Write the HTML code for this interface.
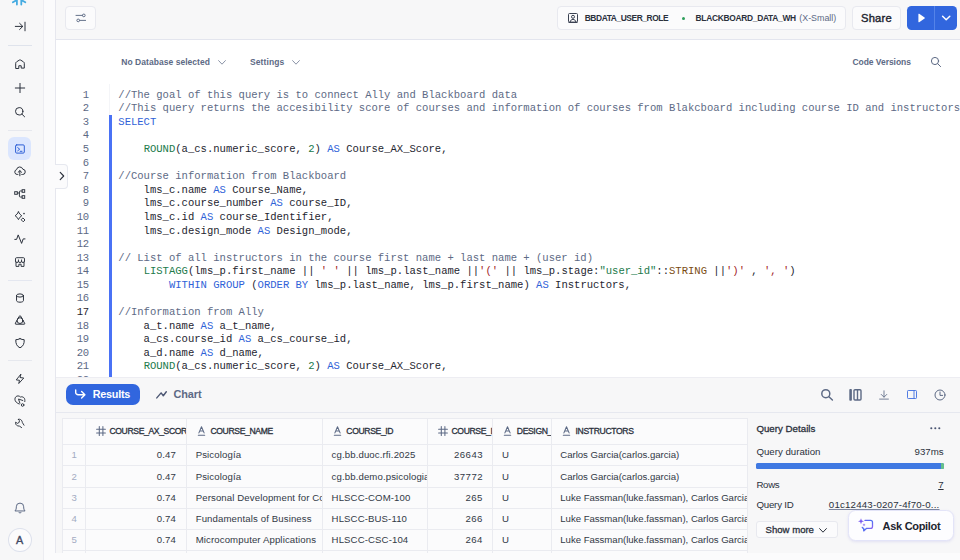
<!DOCTYPE html>
<html lang="en">
<head>
<meta charset="utf-8">
<title>Worksheet</title>
<style>
*{box-sizing:border-box;margin:0;padding:0}
html,body{width:960px;height:560px;overflow:hidden}
body{position:relative;background:#fbfbfc;font-family:"Liberation Sans",Arial,sans-serif;color:#1e252f;-webkit-font-smoothing:antialiased}
.abs{position:absolute}
#side{left:0;top:0;width:44px;height:560px;background:#f7f7f8;border-right:1px solid #ececf1}
#side svg{position:absolute;left:14px;width:12px;height:12px;overflow:visible;fill:none;stroke:#2b313c;stroke-width:1;stroke-linecap:round;stroke-linejoin:round}
.sdiv{position:absolute;left:8px;width:24px;height:1px;background:#dfe3ec}
#main{left:55px;top:0;width:905px;height:553px;background:#fff;border-left:1.4px solid #e6e7ee}
#top{left:56px;top:0;width:904px;height:40px;background:#f7f7f8;border-bottom:1px solid #e3e5ee}
.btn{position:absolute;background:#fbfbfc;border:1px solid #e8e9ef;border-radius:4px}
#edhead{left:56px;top:40px;width:904px;height:44px;background:#fff}
.lbl{position:absolute;font-size:8.5px;line-height:10px;font-weight:bold;color:#5d6a85;white-space:nowrap;letter-spacing:0.04px}
#code{left:56px;top:88.75px;width:904px;height:288px;overflow:hidden;background:#fff;font-family:"Liberation Mono","DejaVu Sans Mono",monospace;font-size:10.555px;line-height:13.585px;color:#1e252f}
#code .ln{position:absolute;left:0;top:0;width:32.8px;letter-spacing:-0.25px;text-align:right;color:#5d6a85;white-space:pre}
#code pre{position:absolute;left:62.3px;top:0;font:inherit;white-space:pre}
.c{color:#5d6a85}.k{color:#2f62d8}.f{color:#217a4b}.n{color:#217a4b}.s{color:#a3231f}.g{color:#217a4b}.t{color:#7a4b12}
#bar{left:109px;top:114.8px;width:2.7px;height:262px;background:#4a72f5}
#res{left:56px;top:376.5px;width:904px;height:176.5px;background:#f7f7f8;box-shadow:inset 0 1px 0 #ededf2}
.tb{font-size:8.4px;font-weight:bold;color:#2b313c;white-space:nowrap;line-height:12px;letter-spacing:-0.4px}
.chev{width:8px;height:5px;overflow:visible;fill:none;stroke:#7d879c;stroke-width:0.9;stroke-linecap:round;stroke-linejoin:round}
#tbl{background:#fbfbfc;border:1px solid #eaebf0}
.th{position:absolute;height:26px;line-height:25px;overflow:hidden;white-space:nowrap;font-size:8.6px;font-weight:normal;-webkit-text-stroke:0.3px #2b313c;color:#2b313c;letter-spacing:-0.36px;padding-left:22.9px}
.th .hi{position:absolute;left:9.2px;top:7.8px;width:10px;height:10px;overflow:visible;fill:none;stroke:#5d6a85;stroke-width:1.05;stroke-linecap:round;stroke-linejoin:round}
.td{position:absolute;overflow:hidden;white-space:nowrap;font-size:9.6px;color:#323946;padding:0 8.2px;letter-spacing:0.12px}
.td.r{text-align:right;padding-right:10.5px}
.td.c{text-align:center;color:#a3abc2;padding:0}
.vl{position:absolute;width:1px;background:#eaebf0}
.hl{position:absolute;height:1px;background:#eaebf0}
.qd{font-size:9.7px;line-height:12px;color:#2b313c;white-space:nowrap}
.md{font-weight:normal;color:#2b313c;-webkit-text-stroke:0.3px #2b313c}
</style>
</head>
<body>
<div id="side" class="abs">
<svg style="left:0;top:0;width:44px;height:8px" viewBox="0 0 44 8"><g stroke="#45abe1" stroke-width="1.8" fill="none" stroke-linecap="round" stroke-linejoin="round"><path d="M16.9 -1V4.5M21.3 -1V4.5M16.6 0.2L12.9 2.2M21.6 0.2L25.3 2.2"/></g></svg>
<svg style="top:20px" viewBox="0 0 12 12"><path d="M1.3 6.4H8.6M5.6 3.3L8.8 6.4L5.6 9.5M11 2.2V10.8"/></svg>
<div class="sdiv" style="top:45px"></div>
<svg style="top:58px" viewBox="0 0 12 12"><path d="M1.7 10.1V5.3Q1.7 4.4 2.5 3.9L5.3 2.1Q6 1.7 6.7 2.1L9.5 3.9Q10.3 4.4 10.3 5.3V10.1H7.2V7.75H4.8V10.1Z"/></svg>
<svg style="top:82px" viewBox="0 0 12 12"><path d="M1.3 6H10.7M6 1.4V10.6"/></svg>
<svg style="top:106px" viewBox="0 0 12 12"><circle cx="5.2" cy="5.3" r="3.7"/><path d="M8 8.2L10.6 10.8"/></svg>
<div class="sdiv" style="top:130px;background:#e6e8ee"></div>
<div class="abs" style="left:8px;top:137.2px;width:23.3px;height:22.7px;border-radius:6px;background:#dbe6fe"></div>
<svg style="top:142.6px;stroke:#2d5fd6" viewBox="0 0 12 12"><rect x="1.6" y="1.9" width="8.7" height="8.2" rx="1.1"/><path d="M3.7 4.6L5.7 6.2L3.7 7.8M6.2 8.3H8"/></svg>
<svg style="top:165px" viewBox="0 0 12 12"><path d="M3.9 9.5H3.3A2.5 2.5 0 0 1 2.6 4.6A3.2 3.2 0 0 1 8.8 4.2A2.6 2.6 0 0 1 8.4 9.5H7.8M5.85 10.8V5.8M4.1 7.3L5.85 5.6L7.6 7.3"/></svg>
<svg style="top:188px;stroke-linejoin:miter;stroke-width:0.95" viewBox="0 0 12 12"><rect x="0.7" y="3.7" width="2.6" height="2.6"/><rect x="8.1" y="1.7" width="2.6" height="2.6"/><rect x="8.1" y="7.7" width="2.6" height="2.6"/><path d="M3.3 5H5.4M8.1 3H6.2Q5.4 3 5.4 3.8V8.2Q5.4 9 6.2 9H8.1"/></svg>
<svg style="top:210.5px;stroke-linejoin:miter;stroke-width:0.95" viewBox="0 0 12 12"><path d="M4.45 0.9Q5.5 3.5 7.8 4.75Q5.5 6 4.45 8.6Q3.4 6 1.1 4.75Q3.4 3.5 4.45 0.9ZM9.2 7.2L11 9L9.2 10.8L7.4 9Z"/><circle cx="10" cy="2.6" r="0.8" fill="#2b313c" stroke="none"/></svg>
<svg style="top:233px" viewBox="0 0 12 12"><path d="M0.8 6.4H2.6L4.2 1.9L7.6 10.4L9.2 5.9H11"/></svg>
<svg style="top:256px;stroke-width:0.95" viewBox="0 0 12 12"><path d="M1.5 5.2V2.8Q1.5 1.7 2.6 1.7H9.4Q10.5 1.7 10.5 2.8V5.2M1.5 5.2A1.47 1.3 0 0 0 4.45 5.2A1.55 1.3 0 0 0 7.55 5.2A1.47 1.3 0 0 0 10.5 5.2M4.45 5.2V3.9M7.55 5.2V3.9M2 6.4V10.4H4.9V8.2H7.1V10.4H10V6.4"/></svg>
<div class="sdiv" style="top:279.5px;height:1.4px;background:#e4e7f0"></div>
<svg style="top:291.5px" viewBox="0 0 12 12"><ellipse cx="6" cy="3.5" rx="3.45" ry="1.6"/><path d="M2.55 3.5V8.6C2.55 9.5 4 10.2 6 10.2S9.45 9.5 9.45 8.6V3.5"/></svg>
<svg style="top:314px" viewBox="0 0 12 12"><path d="M5.5 1.9Q6 1.1 6.5 1.9L10.7 9.4Q11.1 10.2 10.2 10.2H1.8Q0.9 10.2 1.3 9.4Z"/><circle cx="6" cy="6.6" r="2.9"/></svg>
<svg style="top:337px" viewBox="0 0 12 12"><path d="M6 1.7C7.4 2.4 8.8 2.7 10.2 2.7C10.4 6.6 9.2 9.4 6 10.8C2.8 9.4 1.6 6.6 1.8 2.7C3.2 2.7 4.6 2.4 6 1.7Z"/></svg>
<div class="sdiv" style="top:360px;background:#e6e8ee"></div>
<svg style="top:372.5px;stroke-width:0.95" viewBox="0 0 12 12"><path d="M6.7 1.4L2.25 6.9L5.5 7.3L4.75 10.5L9.75 5L6.4 4.6Z"/></svg>
<svg style="top:395px;stroke-width:0.95" viewBox="0 0 12 12"><path d="M5.2 9C3 8.2 0.9 6.6 0.9 4.2C0.9 2.2 2.4 0.9 4 0.9C5 0.9 5.8 1.3 6.4 2C7.4 1.6 8.8 1.8 9.7 2.5C10.8 3.4 11 4.8 10.8 6.6M5.9 8.2L4.5 4L8.8 5.5"/><circle cx="8.6" cy="10" r="1.3"/></svg>
<svg style="top:417px;stroke-width:0.95" viewBox="0 0 12 12"><path d="M4.3 2.3C5.8 1.8 7.4 2.6 8 4.2L8.4 5.6L10 8.2M4.3 2.3L5.4 3.6L5.2 5.4L3.4 6.4L1.6 5.2C1.2 6.6 2 8.2 3.6 8.8L5.6 9.2L7.6 10.6"/></svg>
<svg style="top:502px;stroke:#5d6a85" viewBox="0 0 12 12"><path d="M1.2 8.7C2.2 7.8 2.3 6.6 2.3 4.8A3.7 3.7 0 0 1 9.7 4.8C9.7 6.6 9.8 7.8 10.8 8.7ZM4.9 10.3A1.2 1.2 0 0 0 7.1 10.3"/></svg>
<div class="abs" style="left:7.6px;top:528.2px;width:24px;height:24.2px;border-radius:50%;border:1px solid #dde1ec;background:#fbfbfc;text-align:center;font-size:10.8px;line-height:22.4px;color:#3f4963;-webkit-text-stroke:0.35px #3f4963">A</div>
</div>
<div id="main" class="abs"></div>
<div id="top" class="abs">
<div class="btn" style="left:9.3px;top:6px;width:31.2px;height:24.2px"></div>
<svg class="abs" style="left:18.6px;top:11.5px;width:12px;height:12px;overflow:visible" viewBox="0 0 12 12" fill="none" stroke="#5d6a85" stroke-width="0.95"><path d="M1 3.4H7.4M4.6 8.4H10.6" stroke-linecap="round"/><circle cx="8.8" cy="3.4" r="1.35"/><circle cx="3.2" cy="8.4" r="1.35"/></svg>
<div class="btn" style="left:501px;top:6px;width:288.5px;height:24px"></div>
<svg class="abs" style="left:511.5px;top:13px;width:10px;height:10px;overflow:visible" viewBox="0 0 10 10" fill="none" stroke="#3b4252" stroke-width="1" stroke-linejoin="round"><rect x="0.5" y="0.5" width="9" height="8.6" rx="1"/><circle cx="5" cy="3.8" r="1.5"/><path d="M2.2 9C2.4 7.2 3.6 6.4 5 6.4S7.6 7.2 7.8 9M0.5 9.5H9.5"/></svg>
<div class="abs tb" style="left:528.7px;top:12.1px">BBDATA_USER_ROLE</div>
<div class="abs" style="left:626px;top:16.5px;width:3.1px;height:3.1px;border-radius:50%;background:#2e9e5b"></div>
<div class="abs tb" style="left:639.6px;top:12.1px;letter-spacing:-0.28px">BLACKBOARD_DATA_WH<span style="font-weight:normal;color:#5d6a85;letter-spacing:0;font-size:8.9px;margin-left:3.4px">(X-Small)</span></div>
<div class="btn" style="left:796.3px;top:6px;width:48.3px;height:24px"></div>
<div class="abs" style="left:796.3px;top:6px;width:48.3px;height:24px;text-align:center;font-size:11.2px;line-height:24.4px;color:#1e252f;-webkit-text-stroke:0.4px #1e252f;letter-spacing:0.18px">Share</div>
<div class="abs" style="left:850.5px;top:6px;width:50.4px;height:24px;border-radius:4.5px;background:#3166de"></div>
<div class="abs" style="left:878px;top:6px;width:1px;height:24px;background:#5483e8"></div>
<svg class="abs" style="left:850.5px;top:6px;width:50.4px;height:24px" viewBox="0 0 50.4 24"><path d="M11.4 8.2V15.8A0.5 0.5 0 0 0 12.2 16.2L17.6 12.4A0.5 0.5 0 0 0 17.6 11.6L12.2 7.8A0.5 0.5 0 0 0 11.4 8.2Z" fill="#fff"/><path d="M35.6 10.3L39.2 13.8L42.8 10.3" fill="none" stroke="#fff" stroke-width="1.5" stroke-linecap="round" stroke-linejoin="round"/></svg>
</div>
<div id="edhead" class="abs">
<div class="lbl" style="left:65.3px;top:17.2px">No Database selected</div>
<svg class="abs chev" style="left:161.5px;top:19.6px" viewBox="0 0 8 5"><path d="M0.6 0.6L4 4.2L7.4 0.6"/></svg>
<div class="lbl" style="left:194px;top:17.2px;letter-spacing:0.1px">Settings</div>
<svg class="abs chev" style="left:235.5px;top:19.6px" viewBox="0 0 8 5"><path d="M0.6 0.6L4 4.2L7.4 0.6"/></svg>
<div class="lbl" style="left:796.5px;top:17.2px;letter-spacing:-0.05px">Code Versions</div>
<svg class="abs" style="left:874px;top:16px;width:12px;height:12px;overflow:visible" viewBox="0 0 12 12" fill="none" stroke="#5d6a85" stroke-width="1" stroke-linecap="round"><circle cx="5" cy="5" r="3.6"/><path d="M7.7 7.7L10.6 10.6"/></svg>
</div>
<div class="abs" style="z-index:3;left:55px;top:163.8px;width:12.8px;height:24.8px;background:#fbfbfc;border:1px solid #e6e8ef;border-left:none;border-radius:0 4px 4px 0"></div>
<svg class="abs" style="z-index:4;left:58.6px;top:171.3px;width:6px;height:10px;overflow:visible" viewBox="0 0 6 10" fill="none" stroke="#2b313c" stroke-width="1.1" stroke-linecap="round" stroke-linejoin="round"><path d="M1.2 1.3L4.7 5L1.2 8.7"/></svg>
<div id="code" class="abs">
<div class="ln">1
2
3
4
5
6
7
8
9
10
11
12
13
14
15
16
<span style="color:#1e252f">17</span>
18
19
20
21
22</div>
<pre><span class="c">//The goal of this query is to connect Ally and Blackboard data</span>
<span class="c">//This query returns the accesibility score of courses and information of courses from Blakcboard including course ID and instructors</span>
<span class="k">SELECT</span>

    <span class="f">ROUND</span>(a_cs.numeric_score, <span class="n">2</span>) <span class="k">AS</span> Course_AX_Score,

<span class="c">//Course information from Blackboard</span>
    lms_c.name <span class="k">AS</span> Course_Name,
    lms_c.course_number <span class="k">AS</span> course_ID,
    lms_c.id <span class="k">AS</span> course_Identifier,
    lms_c.design_mode <span class="k">AS</span> Design_mode,

<span class="c">// List of all instructors in the course first name + last name + (user id)</span>
    <span class="f">LISTAGG</span>(lms_p.first_name || <span class="s">' '</span> || lms_p.last_name ||<span class="s">'('</span> || lms_p.stage:<span class="g">"user_id"</span>::<span class="t">STRING</span> ||<span class="s">')'</span> , <span class="s">', '</span>)
        <span class="k">WITHIN GROUP</span> (<span class="k">ORDER BY</span> lms_p.last_name, lms_p.first_name) <span class="k">AS</span> Instructors,

<span class="c">//Information from Ally</span>
    a_t.name <span class="k">AS</span> a_t_name,
    a_cs.course_id <span class="k">AS</span> a_cs_course_id,
    a_d.name <span class="k">AS</span> d_name,
    <span class="f">ROUND</span>(a_cs.numeric_score, <span class="n">2</span>) <span class="k">AS</span> Course_AX_Score,
</pre>
</div>
<div class="abs" style="left:109.2px;top:84px;width:1px;height:32px;background:#f4f5f8"></div>
<div id="bar" class="abs"></div>
<div id="res" class="abs">
<div class="abs" style="left:9.5px;top:7.4px;width:74.4px;height:21.2px;border-radius:7px;background:#3166de"></div>
<svg class="abs" style="left:19px;top:12.5px;width:12px;height:10px;overflow:visible" viewBox="0 0 12 10" fill="none" stroke="#fff" stroke-width="1.4" stroke-linecap="round" stroke-linejoin="round"><path d="M0.7 0.9V3.4A2.4 2.4 0 0 0 3.1 5.8H9.6M6.6 2.5L9.9 5.8L6.6 9.1"/></svg>
<div class="abs" style="left:36.7px;top:11.4px;font-size:10.8px;line-height:13px;font-weight:bold;color:#fff;letter-spacing:-0.22px">Results</div>
<svg class="abs" style="left:99.5px;top:14px;width:11px;height:8px;overflow:visible" viewBox="0 0 11 8" fill="none" stroke="#4a5572" stroke-width="1.4" stroke-linecap="round" stroke-linejoin="round"><path d="M0.8 6.9L5.1 1.9L7.3 4.7L10.3 0.8"/></svg>
<div class="abs" style="left:117.5px;top:11.4px;font-size:10.9px;line-height:13px;font-weight:bold;color:#5d6a85;letter-spacing:-0.1px">Chart</div>
<svg class="abs" style="left:764px;top:10px;width:14px;height:14px;overflow:visible" viewBox="0 0 14 14" fill="none" stroke="#5d6a85" stroke-width="1.5" stroke-linecap="round"><circle cx="5.8" cy="6.7" r="4"/><path d="M8.9 9.8L12.4 13"/></svg>
<svg class="abs" style="left:793px;top:12px;width:13px;height:12px;overflow:visible" viewBox="0 0 13 12" fill="none" stroke="#5d6a85" stroke-width="1.4" stroke-linejoin="round"><rect x="0.3" y="0.1" width="2.6" height="11.6" rx="0.8" fill="#5d6a85" stroke="none"/><rect x="5" y="0.8" width="7" height="10.2" rx="1"/><path d="M8.5 0.8V11"/></svg>
<svg class="abs" style="left:822.5px;top:13px;width:10px;height:10px;overflow:visible" viewBox="0 0 10 10" fill="none" stroke="#5d6a85" stroke-width="0.85" stroke-linecap="round" stroke-linejoin="round"><path d="M5 0.8V7M2.2 4.4L5 7.2L7.8 4.4M0.6 9.1H9.4"/></svg>
<svg class="abs" style="left:850.5px;top:13.5px;width:10px;height:9px;overflow:visible" viewBox="0 0 10 9" fill="none" stroke="#3f6ee0" stroke-width="0.9" stroke-linejoin="round"><rect x="0.5" y="0.5" width="9" height="8" rx="0.8"/><path d="M7 0.5V8.5"/></svg>
<svg class="abs" style="left:877.5px;top:12px;width:12px;height:12px;overflow:visible" viewBox="0 0 12 12" fill="none" stroke="#5d6a85" stroke-width="1" stroke-linecap="round" stroke-linejoin="round"><circle cx="6" cy="6" r="5"/><path d="M6 3V6.4H8.6"/></svg>
<div class="abs" style="left:0;top:35.2px;width:904px;height:1px;background:#e6e8ef"></div>
<div id="tbl" class="abs" style="left:5.6px;top:41.5px;width:686.5px;height:136.0px"></div>
<div class="th" style="left:30.5px;top:42.0px;width:100.0px"><svg class="hi" viewBox="0 0 10 10"><path d="M3.3 0.6V9.4M6.9 0.6V9.4M0.6 3.3H9.4M0.6 6.9H9.4"/></svg><span>COURSE_AX_SCORE</span></div>
<div class="th" style="left:131.5px;top:42.0px;width:134.9px"><svg class="hi" style="width:7px;left:10.6px" viewBox="0 0 7 10"><path d="M0.9 6.9L3.5 0.8L6.1 6.9M1.8 4.9H5.2M0.3 9.3H6.7"/></svg><span>COURSE_NAME</span></div>
<div class="th" style="left:267.4px;top:42.0px;width:104.2px"><svg class="hi" style="width:7px;left:10.6px" viewBox="0 0 7 10"><path d="M0.9 6.9L3.5 0.8L6.1 6.9M1.8 4.9H5.2M0.3 9.3H6.7"/></svg><span>COURSE_ID</span></div>
<div class="th" style="left:372.6px;top:42.0px;width:64.3px"><svg class="hi" viewBox="0 0 10 10"><path d="M3.3 0.6V9.4M6.9 0.6V9.4M0.6 3.3H9.4M0.6 6.9H9.4"/></svg><span>COURSE_ID_NUM</span></div>
<div class="th" style="left:437.9px;top:42.0px;width:57.8px"><svg class="hi" style="width:7px;left:10.6px" viewBox="0 0 7 10"><path d="M0.9 6.9L3.5 0.8L6.1 6.9M1.8 4.9H5.2M0.3 9.3H6.7"/></svg><span>DESIGN_MODE</span></div>
<div class="th" style="left:496.7px;top:42.0px;width:194.8px"><svg class="hi" style="width:7px;left:10.6px" viewBox="0 0 7 10"><path d="M0.9 6.9L3.5 0.8L6.1 6.9M1.8 4.9H5.2M0.3 9.3H6.7"/></svg><span>INSTRUCTORS</span></div>
<div class="td c" style="left:7.0px;top:67.75px;width:22.5px;height:21.50px;line-height:21.50px">1</div>
<div class="td r" style="left:30.5px;top:67.75px;width:100.0px;height:21.50px;line-height:21.50px">0.47</div>
<div class="td l" style="left:131.5px;top:67.75px;width:134.9px;height:21.50px;line-height:21.50px">Psicología</div>
<div class="td l" style="left:267.4px;top:67.75px;width:104.2px;height:21.50px;line-height:21.50px">cg.bb.duoc.rfi.2025</div>
<div class="td r" style="left:372.6px;top:67.75px;width:64.3px;height:21.50px;line-height:21.50px;letter-spacing:0.42px;padding-right:10px">26643</div>
<div class="td l" style="left:437.9px;top:67.75px;width:57.8px;height:21.50px;line-height:21.50px">U</div>
<div class="td l" style="left:496.7px;top:67.75px;width:194.8px;height:21.50px;line-height:21.50px;letter-spacing:-0.02px;padding-left:7.6px">Carlos Garcia(carlos.garcia)</div>
<div class="td c" style="left:7.0px;top:89.25px;width:22.5px;height:21.25px;line-height:21.25px">2</div>
<div class="td r" style="left:30.5px;top:89.25px;width:100.0px;height:21.25px;line-height:21.25px">0.47</div>
<div class="td l" style="left:131.5px;top:89.25px;width:134.9px;height:21.25px;line-height:21.25px">Psicología</div>
<div class="td l" style="left:267.4px;top:89.25px;width:104.2px;height:21.25px;line-height:21.25px">cg.bb.demo.psicologia</div>
<div class="td r" style="left:372.6px;top:89.25px;width:64.3px;height:21.25px;line-height:21.25px;letter-spacing:0.42px;padding-right:10px">37772</div>
<div class="td l" style="left:437.9px;top:89.25px;width:57.8px;height:21.25px;line-height:21.25px">U</div>
<div class="td l" style="left:496.7px;top:89.25px;width:194.8px;height:21.25px;line-height:21.25px;letter-spacing:-0.02px;padding-left:7.6px">Carlos Garcia(carlos.garcia)</div>
<div class="td c" style="left:7.0px;top:110.50px;width:22.5px;height:21.00px;line-height:21.00px">3</div>
<div class="td r" style="left:30.5px;top:110.50px;width:100.0px;height:21.00px;line-height:21.00px">0.74</div>
<div class="td l" style="left:131.5px;top:110.50px;width:134.9px;height:21.00px;line-height:21.00px">Personal Development for College</div>
<div class="td l" style="left:267.4px;top:110.50px;width:104.2px;height:21.00px;line-height:21.00px">HLSCC-COM-100</div>
<div class="td r" style="left:372.6px;top:110.50px;width:64.3px;height:21.00px;line-height:21.00px;letter-spacing:0.42px;padding-right:10px">265</div>
<div class="td l" style="left:437.9px;top:110.50px;width:57.8px;height:21.00px;line-height:21.00px">U</div>
<div class="td l" style="left:496.7px;top:110.50px;width:194.8px;height:21.00px;line-height:21.00px;letter-spacing:-0.02px;padding-left:7.6px">Luke Fassman(luke.fassman), Carlos Garcia(carlos.garcia)</div>
<div class="td c" style="left:7.0px;top:131.50px;width:22.5px;height:21.25px;line-height:21.25px">4</div>
<div class="td r" style="left:30.5px;top:131.50px;width:100.0px;height:21.25px;line-height:21.25px">0.74</div>
<div class="td l" style="left:131.5px;top:131.50px;width:134.9px;height:21.25px;line-height:21.25px">Fundamentals of Business</div>
<div class="td l" style="left:267.4px;top:131.50px;width:104.2px;height:21.25px;line-height:21.25px">HLSCC-BUS-110</div>
<div class="td r" style="left:372.6px;top:131.50px;width:64.3px;height:21.25px;line-height:21.25px;letter-spacing:0.42px;padding-right:10px">266</div>
<div class="td l" style="left:437.9px;top:131.50px;width:57.8px;height:21.25px;line-height:21.25px">U</div>
<div class="td l" style="left:496.7px;top:131.50px;width:194.8px;height:21.25px;line-height:21.25px;letter-spacing:-0.02px;padding-left:7.6px">Luke Fassman(luke.fassman), Carlos Garcia(carlos.garcia)</div>
<div class="td c" style="left:7.0px;top:152.75px;width:22.5px;height:21.00px;line-height:21.00px">5</div>
<div class="td r" style="left:30.5px;top:152.75px;width:100.0px;height:21.00px;line-height:21.00px">0.74</div>
<div class="td l" style="left:131.5px;top:152.75px;width:134.9px;height:21.00px;line-height:21.00px">Microcomputer Applications</div>
<div class="td l" style="left:267.4px;top:152.75px;width:104.2px;height:21.00px;line-height:21.00px">HLSCC-CSC-104</div>
<div class="td r" style="left:372.6px;top:152.75px;width:64.3px;height:21.00px;line-height:21.00px;letter-spacing:0.42px;padding-right:10px">264</div>
<div class="td l" style="left:437.9px;top:152.75px;width:57.8px;height:21.00px;line-height:21.00px">U</div>
<div class="td l" style="left:496.7px;top:152.75px;width:194.8px;height:21.00px;line-height:21.00px;letter-spacing:-0.02px;padding-left:7.6px">Luke Fassman(luke.fassman), Carlos Garcia(carlos.garcia)</div>
<div class="td c" style="left:7.0px;top:173.75px;width:22.5px;height:21.25px;line-height:21.25px">6</div>
<div class="td r" style="left:30.5px;top:173.75px;width:100.0px;height:21.25px;line-height:21.25px">0.74</div>
<div class="td l" style="left:131.5px;top:173.75px;width:134.9px;height:21.25px;line-height:21.25px">Introduction to Psychology</div>
<div class="td l" style="left:267.4px;top:173.75px;width:104.2px;height:21.25px;line-height:21.25px">HLSCC-PSY-101</div>
<div class="td r" style="left:372.6px;top:173.75px;width:64.3px;height:21.25px;line-height:21.25px;letter-spacing:0.42px;padding-right:10px">267</div>
<div class="td l" style="left:437.9px;top:173.75px;width:57.8px;height:21.25px;line-height:21.25px">U</div>
<div class="td l" style="left:496.7px;top:173.75px;width:194.8px;height:21.25px;line-height:21.25px;letter-spacing:-0.02px;padding-left:7.6px">Luke Fassman(luke.fassman), Carlos Garcia(carlos.garcia)</div>
<div class="vl" style="left:29.0px;top:41.5px;height:135.0px"></div>
<div class="vl" style="left:130.0px;top:41.5px;height:135.0px"></div>
<div class="vl" style="left:265.9px;top:41.5px;height:135.0px"></div>
<div class="vl" style="left:371.1px;top:41.5px;height:135.0px"></div>
<div class="vl" style="left:436.4px;top:41.5px;height:135.0px"></div>
<div class="vl" style="left:495.2px;top:41.5px;height:135.0px"></div>
<div class="hl" style="left:6.0px;top:67.25px;width:685.5px"></div>
<div class="hl" style="left:6.0px;top:88.75px;width:685.5px"></div>
<div class="hl" style="left:6.0px;top:110.00px;width:685.5px"></div>
<div class="hl" style="left:6.0px;top:131.00px;width:685.5px"></div>
<div class="hl" style="left:6.0px;top:152.25px;width:685.5px"></div>
<div class="hl" style="left:6.0px;top:173.25px;width:685.5px"></div>
<div class="abs qd md" style="left:700.4px;top:46px;letter-spacing:0.02px">Query Details</div>
<svg class="abs" style="left:873.6px;top:50.6px;width:11px;height:3px;overflow:visible" viewBox="0 0 11 3" fill="#4a5572"><circle cx="1.3" cy="1.3" r="1.05"/><circle cx="5.3" cy="1.3" r="1.05"/><circle cx="9.3" cy="1.3" r="1.05"/></svg>
<div class="abs qd" style="left:700.4px;top:69.5px">Query duration</div>
<div class="abs qd" style="right:16.4px;top:69.5px">937ms</div>
<div class="abs" style="left:700.2px;top:86.8px;width:187.4px;height:5.8px;border-radius:1.5px;background:#4079e2;overflow:hidden"><div class="abs" style="right:0;top:0;width:2.8px;height:6px;background:#66c08a"></div></div>
<div class="abs qd" style="left:700.4px;top:102.1px;letter-spacing:-0.3px">Rows</div>
<div class="abs qd" style="right:16.4px;top:102.1px;text-decoration:underline">7</div>
<div class="abs qd" style="left:700.4px;top:122.7px;letter-spacing:-0.2px">Query ID</div>
<div class="abs qd" style="left:772.8px;top:122.7px;text-decoration:underline;text-decoration-color:#7d869f;letter-spacing:0.2px">01c12443-0207-4f70-0...</div>
<div class="btn" style="left:700.4px;top:144.2px;width:82px;height:17.8px;border-radius:3px"></div>
<div class="abs qd md" style="left:709.6px;top:147px;font-size:9.6px;letter-spacing:-0.02px">Show more</div>
<svg class="abs chev" style="left:763.3px;top:151.6px;stroke:#2b313c;stroke-width:1" viewBox="0 0 8 5"><path d="M0.6 0.6L4 4.2L7.4 0.6"/></svg>
<div class="abs" style="left:792px;top:133.8px;width:105.6px;height:30.8px;border-radius:7.5px;background:#fdfdff;border:1px solid #e3e4f8;box-shadow:0 1px 3px rgba(120,110,220,0.16)"></div>
<svg class="abs" style="left:802px;top:141.8px;width:16px;height:14px;overflow:visible" viewBox="0 0 16 14" fill="none" stroke-width="1.3" stroke-linecap="round" stroke-linejoin="round"><linearGradient id="cg" x1="0" y1="0" x2="1" y2="1"><stop offset="0" stop-color="#6a5cf2"/><stop offset="0.5" stop-color="#4f74f3"/><stop offset="1" stop-color="#a05cf0"/></linearGradient><path d="M7 2.4H12.6A1.9 1.9 0 0 1 14.5 4.3V8.5A1.9 1.9 0 0 1 12.6 10.4H8.4L5.7 12.9V10.4A1.9 1.9 0 0 1 4.3 9.4" stroke="url(#cg)"/><path d="M3 0.2L3.8 2.4L6 3.2L3.8 4L3 6.2L2.2 4L0 3.2L2.2 2.4Z" fill="#7a5af0" stroke="none"/><path d="M6 5.2L6.45 6.45L7.7 6.9L6.45 7.35L6 8.6L5.55 7.35L4.3 6.9L5.55 6.45Z" fill="#7a5af0" stroke="none"/></svg>
<div class="abs" style="left:826.6px;top:142.6px;font-size:11px;line-height:14px;font-weight:bold;color:#1e252f;letter-spacing:-0.3px">Ask Copilot</div>
</div>
<div class="abs" style="left:45px;top:553px;width:915px;height:7px;background:#fbfbfc"></div>
</body>
</html>
